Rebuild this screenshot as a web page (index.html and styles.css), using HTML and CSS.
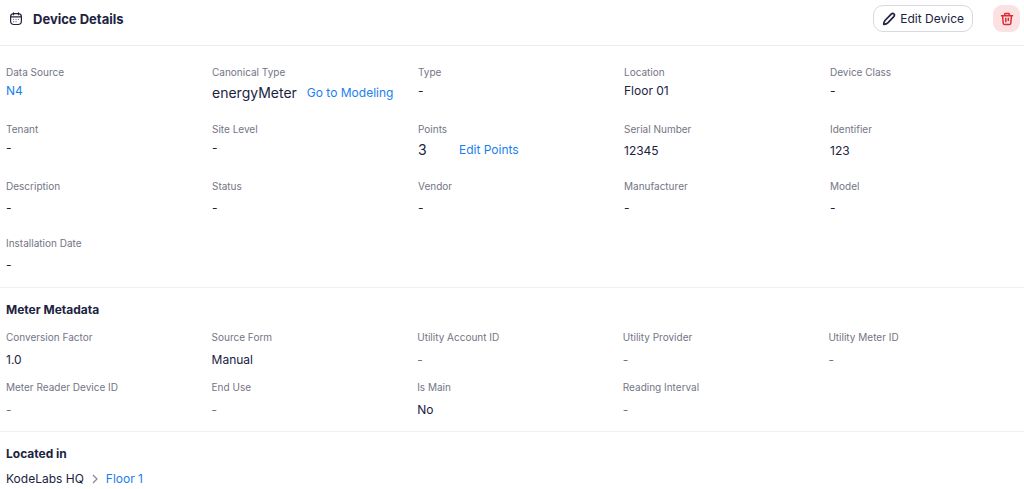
FILE: index.html
```html
<!DOCTYPE html>
<html lang="en">
<head>
<meta charset="utf-8">
<title>Device Details</title>
<link rel="stylesheet" href="styles.css">
</head>
<body>
<header class="header">
  <svg class="header-icon" width="14" height="14" viewBox="0 0 14 14" fill="none" stroke="currentColor" stroke-linecap="round" aria-hidden="true"><path d="M4.2 1.6h5.6c1.8.3 2.6 1.4 2.6 3.2v3.9c0 2.6-1.2 3.8-3.4 3.8H5c-2.2 0-3.4-1.2-3.4-3.8V4.8c0-1.8.8-2.9 2.6-3.2ZM4.5.9v1.8M9.5.9v1.8M2 4.9h10" stroke-width="1.2"/><path d="M4.6 7.3h.1M7 7.3h.1M9.3 7.3h.1M4.6 9.7h.1M7 9.7h.1" stroke-width="1.2" opacity=".65"/></svg>
  <h1 class="title">Device Details</h1>
  <button class="edit-button" type="button">
    <svg width="14" height="14" viewBox="0 0 14 14" fill="none" stroke="currentColor" stroke-width="1.7" stroke-linejoin="round" aria-hidden="true"><path d="M1.7 12.3C1.7 10.8 2 9.6 3 8.5L9.2 2.1C10.1 1.2 11.1 1.1 11.9 1.8C12.7 2.6 12.6 3.6 11.8 4.6L5.8 10.9C4.7 12 3.3 12.4 1.7 12.3Z"/></svg>
    Edit Device
  </button>
  <button class="delete-button" type="button" aria-label="Delete device">
    <svg width="14" height="14" viewBox="0 0 14 14" fill="none" stroke="currentColor" stroke-width="1.5" stroke-linecap="round" stroke-linejoin="round" aria-hidden="true"><path d="M1.5 3.7h11M4.5 3.5 5 1.5h4l.5 2M2.6 4l.6 7.2c.1 1 .6 1.4 1.5 1.4h4.6c.9 0 1.4-.4 1.5-1.4L11.4 4M5.8 6.3v3.4M8.3 6.3v2.2"/></svg>
  </button>
</header>
<main>
  <section class="section section-details">
    <dl class="grid grid-details">
      <div class="field tight"><dt>Data Source</dt><dd><a href="#">N4</a></dd></div>
      <div class="field tight"><dt>Canonical Type</dt><dd class="with-action"><span class="large">energyMeter</span><a href="#">Go to Modeling</a></dd></div>
      <div class="field tight"><dt>Type</dt><dd>-</dd></div>
      <div class="field tight"><dt>Location</dt><dd>Floor 01</dd></div>
      <div class="field tight"><dt>Device Class</dt><dd>-</dd></div>
      <div class="field tight"><dt>Tenant</dt><dd>-</dd></div>
      <div class="field tight"><dt>Site Level</dt><dd>-</dd></div>
      <div class="field tight"><dt>Points</dt><dd class="with-action"><span class="large">3</span><a href="#">Edit Points</a></dd></div>
      <div class="field"><dt>Serial Number</dt><dd>12345</dd></div>
      <div class="field"><dt>Identifier</dt><dd>123</dd></div>
      <div class="field"><dt>Description</dt><dd>-</dd></div>
      <div class="field"><dt>Status</dt><dd>-</dd></div>
      <div class="field"><dt>Vendor</dt><dd>-</dd></div>
      <div class="field"><dt>Manufacturer</dt><dd>-</dd></div>
      <div class="field"><dt>Model</dt><dd>-</dd></div>
      <div class="field"><dt>Installation Date</dt><dd>-</dd></div>
    </dl>
  </section>
  <section class="section">
    <h2 class="heading">Meter Metadata</h2>
    <dl class="grid grid-meter">
      <div class="field"><dt>Conversion Factor</dt><dd>1.0</dd></div>
      <div class="field"><dt>Source Form</dt><dd>Manual</dd></div>
      <div class="field"><dt>Utility Account ID</dt><dd class="empty">-</dd></div>
      <div class="field"><dt>Utility Provider</dt><dd class="empty">-</dd></div>
      <div class="field"><dt>Utility Meter ID</dt><dd class="empty">-</dd></div>
      <div class="field"><dt>Meter Reader Device ID</dt><dd class="empty">-</dd></div>
      <div class="field"><dt>End Use</dt><dd class="empty">-</dd></div>
      <div class="field"><dt>Is Main</dt><dd>No</dd></div>
      <div class="field"><dt>Reading Interval</dt><dd class="empty">-</dd></div>
    </dl>
  </section>
  <section class="section section-location">
    <h2 class="heading">Located in</h2>
    <nav class="breadcrumb" aria-label="Location">
      <span>KodeLabs HQ</span>
      <svg width="6" height="10" viewBox="0 0 6 10" fill="none" stroke="currentColor" stroke-width="1.2" aria-hidden="true"><path d="m1 1 4 4-4 4"/></svg>
      <a href="#">Floor 1</a>
    </nav>
  </section>
</main>
</body>
</html>
```

FILE: styles.css
```css
* { box-sizing: border-box; }
body {
  margin: 0;
  background: #fff;
  color: #20233f;
  font: 12px/18px Inter, "Liberation Sans", sans-serif;
}
h1, h2, dl, dd { margin: 0; }
a { color: #1a80ee; text-decoration: none; }
svg { flex: none; }
.header {
  display: flex;
  align-items: center;
  padding: 5px 4px 13px 9px;
  border-bottom: 1px solid #ececef;
}
.title {
  margin-left: 10px;
  margin-right: auto;
  font-size: 13px;
  font-weight: 700;
}
.edit-button, .delete-button {
  display: flex;
  align-items: center;
  justify-content: center;
  height: 27px;
  font: inherit;
  cursor: pointer;
}
.edit-button {
  gap: 4px;
  padding: 0 8px;
  border: 1px solid #d8d8e0;
  border-radius: 10px;
  background: #fff;
  color: inherit;
}
.delete-button {
  width: 27px;
  margin-left: 20px;
  padding: 0;
  border: 0;
  border-radius: 9px;
  background: #fbe1e2;
  color: #dc2b32;
}
.section {
  padding: 12px 6px;
  border-bottom: 1px solid #f0f0f2;
}
.section-details { padding-top: 18px; padding-bottom: 13px; }
.section-location { padding-bottom: 0; border-bottom: 0; }
.heading {
  font-size: 12px;
  line-height: 20px;
  font-weight: 700;
}
.grid {
  display: grid;
  grid-template-columns: repeat(5, minmax(0, 1fr));
}
.field { display: flex; flex-direction: column; gap: 5px; }
.tight { gap: 2px; }
.grid-details { gap: 18px; }
.grid-meter { margin-top: 9px; gap: 10px 16px; }
.grid-meter .field { gap: 6px; }
dt {
  color: #737585;
  font-size: 10px;
  line-height: 16px;
}
.empty { color: #737585; }
.with-action {
  display: flex;
  align-items: center;
  gap: 10px;
  line-height: 21px;
  white-space: nowrap;
}
.large { min-width: 31px; font-size: 14px; }
.breadcrumb {
  display: flex;
  align-items: center;
  gap: 8px;
  margin-top: 6px;
}
.breadcrumb svg { color: #858796; }
```
